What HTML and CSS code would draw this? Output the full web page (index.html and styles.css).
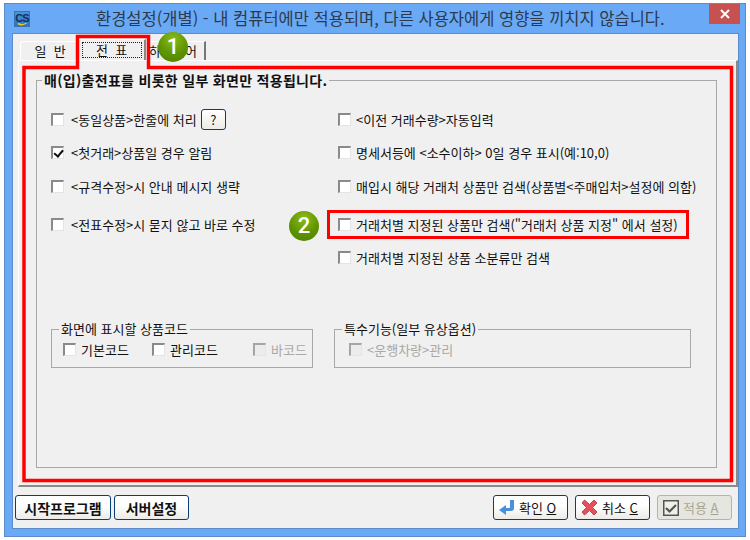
FILE: index.html
```html
<!DOCTYPE html>
<html lang="ko">
<head>
<meta charset="utf-8">
<title>환경설정(개별)</title>
<link rel="stylesheet" href="styles.css">
</head>
<body>
<div class="window">
  <header class="titlebar">
    <span class="app-icon">
      <svg width="14" height="14" viewBox="0 0 14 14"><path d="M3 11.500Q7 14 11.500 11" stroke="#e8c33a" stroke-width="1.500" fill="none"/></svg>
      <span class="app-icon-text">CS</span>
    </span>
    <h1 class="title">환경설정(개별) - 내 컴퓨터에만 적용되며, 다른 사용자에게 영향을 끼치지 않습니다.</h1>
    <button class="close" aria-label="닫기">
      <svg width="12" height="10" viewBox="0 0 12 10"><path d="M2 1l8 8M10 1l-8 8" stroke="#fff" stroke-width="2" fill="none"/></svg>
    </button>
  </header>
  <div class="client">
    <nav class="tabs">
      <div class="tab tab-first">일&nbsp;&nbsp;반</div>
      <div class="tab tab-active"><span class="focus">전&nbsp;&nbsp;표</span></div>
      <div class="tab tab-last">하드웨어</div>
    </nav>
    <section class="pane">
      <fieldset class="group main-group">
        <legend class="legend-bold">매(입)출전표를 비롯한 일부 화면만 적용됩니다.</legend>
        <div class="options">
          <div class="col col-left">
            <label class="opt row-1"><input type="checkbox"><span>&lt;동일상품&gt;한줄에 처리</span><span class="help">?</span></label>
            <label class="opt row-2"><input type="checkbox" checked><span>&lt;첫거래&gt;상품일 경우 알림</span></label>
            <label class="opt row-3"><input type="checkbox"><span>&lt;규격수정&gt;시 안내 메시지 생략</span></label>
            <label class="opt row-4"><input type="checkbox"><span>&lt;전표수정&gt;시 묻지 않고 바로 수정</span></label>
          </div>
          <div class="col">
            <label class="opt row-1"><input type="checkbox"><span>&lt;이전 거래수량&gt;자동입력</span></label>
            <label class="opt row-2"><input type="checkbox"><span>명세서등에 &lt;소수이하&gt; 0일 경우 표시(예:10,0)</span></label>
            <label class="opt row-3"><input type="checkbox"><span>매입시 해당 거래처 상품만 검색(상품별&lt;주매입처&gt;설정에 의함)</span></label>
            <label class="opt row-4"><input type="checkbox"><span>거래처별 지정된 상품만 검색("거래처 상품 지정" 에서 설정)</span></label>
            <label class="opt row-5"><input type="checkbox"><span>거래처별 지정된 상품 소분류만 검색</span></label>
          </div>
        </div>
        <div class="subgroups">
          <fieldset class="group sub-left">
            <legend>화면에 표시할 상품코드</legend>
            <div class="sub-row">
              <label class="opt-sm w-1"><input type="checkbox"><span>기본코드</span></label>
              <label class="opt-sm w-2"><input type="checkbox"><span>관리코드</span></label>
              <label class="opt-sm is-disabled"><input type="checkbox" disabled><span>바코드</span></label>
            </div>
          </fieldset>
          <fieldset class="group sub-right">
            <legend>특수기능(일부 유상옵션)</legend>
            <div class="sub-row">
              <label class="opt-sm is-disabled"><input type="checkbox" disabled><span>&lt;운행차량&gt;관리</span></label>
            </div>
          </fieldset>
        </div>
      </fieldset>
    </section>
    <footer class="footer">
      <button class="btn btn-bold btn-start">시작프로그램</button>
      <button class="btn btn-bold btn-server">서버설정</button>
      <span class="spacer"></span>
      <button class="btn btn-act">
        <svg width="16" height="16" viewBox="0 0 16 16"><path d="M11 0h4v8q0 3-3 3H7v4L0 10l7-5v3h4z" fill="#4a8fdc"/></svg>
        <span>확인 <u>O</u></span>
      </button>
      <button class="btn btn-act">
        <svg width="17" height="17" viewBox="0 0 17 17"><path d="M3.500 1l5 4.500L13 1l3 3-4.500 4.500L16 13l-3 3-4.500-4.500L3.500 16 1 13l4.500-4.500L1 4z" fill="#e5505a" stroke="#b9474b"/></svg>
        <span>취소 <u>C</u></span>
      </button>
      <button class="btn btn-act btn-off" disabled>
        <svg width="16" height="16" viewBox="0 0 16 16"><rect x="0.750" y="0.750" width="14.500" height="14.500" fill="#f0f0ea" stroke="#555" stroke-width="1.500"/><path d="M3 8l3.500 3.500L13 5" stroke="#555" stroke-width="2.200" fill="none"/></svg>
        <span>적용 <u>A</u></span>
      </button>
    </footer>
  </div>
</div>

<svg class="marks" width="750" height="540" viewBox="0 0 750 540" aria-hidden="true">
  <path d="M24 67.500H77.500V36.500H148.500V67.500H731.500V480.500H24Z" fill="none" stroke="#ff0000" stroke-width="3.500"/>
  <rect x="328.500" y="211.500" width="359" height="26" fill="none" stroke="#ff0000" stroke-width="3"/>
</svg>
<div class="badge badge-1">1</div>
<div class="badge badge-2">2</div>
</body>
</html>
```

FILE: styles.css
```css
* { box-sizing: border-box; }
html, body { margin: 0; padding: 0; background: #fff; }
body {
  width: 750px;
  height: 540px;
  position: relative;
  overflow: hidden;
  padding: 3px 4px;
  font-family: "Noto Sans CJK KR", "Liberation Sans", sans-serif;
  font-size: 13px;
  color: #111;
}
.window {
  width: 742px;
  height: 534px;
  background: #69a9f5;
  border: 1px solid #5b8cc8;
  display: flex;
  flex-direction: column;
}
.titlebar {
  height: 29px;
  flex: none;
  display: flex;
  align-items: flex-start;
  padding-left: 9px;
}
.app-icon {
  width: 16px;
  height: 16px;
  margin-top: 7px;
  background: linear-gradient(#4d93d9, #2f72b8);
  border: 1px solid #3a74b0;
  position: relative;
  display: flex;
  align-items: center;
  justify-content: center;
}
.app-icon svg {
  position: absolute;
  left: 0;
  top: 0;
}
.app-icon-text {
  font: bold 11px/1 "Liberation Sans", sans-serif;
  color: #12305c;
  letter-spacing: -1px;
  margin-top: -2px;
}
.title {
  margin: 3px 0 0 66px;
  font-size: 16.500px;
  font-weight: 400;
  line-height: 22px;
  color: #2d3a4d;
  white-space: nowrap;
  width: 600px;
}
.close {
  margin-left: auto;
  margin-right: 5px;
  width: 31px;
  height: 20px;
  border: 0;
  padding: 0;
  background: #c75050;
  display: flex;
  align-items: center;
  justify-content: center;
}
.client {
  width: 727px;
  height: 496px;
  margin-left: 7px;
  background: #f0f0f0;
  border: 1px solid #5b8cc8;
  display: flex;
  flex-direction: column;
}
.tabs {
  height: 26px;
  flex: none;
  display: flex;
  align-items: flex-end;
  padding-left: 7px;
}
.tab {
  height: 19px;
  display: flex;
  align-items: center;
  justify-content: center;
  background: #f0f0f0;
  border-top: 1px solid #fff;
  border-left: 1px solid #fff;
  border-right: 1px solid #696969;
  line-height: 16px;
}
.tab-first {
  width: 57px;
  margin-right: 1px;
  border-radius: 3px 0 0 0;
  padding: 0 0 1px 3px;
}
.tab-active {
  width: 68px;
  height: 21px;
  padding: 2px;
  border-right: 2px solid #888;
}
.focus {
  width: 60px;
  height: 16px;
  display: flex;
  align-items: center;
  justify-content: center;
  border: 1px dotted #222;
}
.tab-last {
  width: 60px;
  border-left: 0;
  border-right: 2px solid #777;
  padding: 0 4px 1px 0;
}
.pane {
  width: 720px;
  height: 427px;
  flex: none;
  margin-left: 5px;
  border-top: 1px solid #fff;
  border-left: 1px solid #fff;
  border-right: 2px solid #8a8a8a;
  border-bottom: 2px solid #8a8a8a;
  padding: 12px 19px 0 17px;
}
.group {
  margin: 0;
  border: 1px solid #a8a8a8;
  padding: 0;
  min-width: 0;
}
.group legend {
  padding: 0 2px;
  line-height: 14px;
  margin-left: 7px;
}
.main-group {
  width: 681px;
  height: 395px;
}
.group .legend-bold {
  font-weight: 700;
  font-size: 14px;
  letter-spacing: .3px;
  margin-left: 5px;
}
.options {
  display: grid;
  grid-template-columns: 287px 1fr;
  height: 235px;
  padding: 22px 0 0 14px;
}
.col { display: flex; flex-direction: column; }
.opt {
  display: flex;
  align-items: center;
  height: 20px;
  white-space: nowrap;
}
.row-2 { margin-top: 13px; }
.row-3 { margin-top: 14px; }
.row-4 { margin-top: 18px; }
.row-5 { margin-top: 13px; }
input[type="checkbox"] {
  appearance: none;
  width: 13px;
  height: 13px;
  margin: 0 5px 0 0;
  flex: none;
  background: #fff;
  border-top: 2px solid #8a8a8a;
  border-left: 2px solid #8a8a8a;
  border-right: 1px solid #e4e4e4;
  border-bottom: 1px solid #e4e4e4;
  position: relative;
}
.col-left input[type="checkbox"] { margin-right: 7px; }
input[type="checkbox"]:checked::after {
  content: "";
  position: absolute;
  left: 1px;
  top: 0;
  width: 7px;
  height: 4px;
  border-left: 2px solid #111;
  border-bottom: 2px solid #111;
  transform: rotate(-50deg) translate(-1px, 1px);
}
input[type="checkbox"]:disabled {
  background: #ececec;
  border-top-color: #a5a5a5;
  border-left-color: #a5a5a5;
}
.help {
  width: 25px;
  height: 21px;
  margin-left: 4px;
  border: 1px solid #0a3f73;
  border-radius: 3px;
  background: linear-gradient(#fff, #ecebe6);
  display: flex;
  align-items: center;
  justify-content: center;
}
.subgroups {
  display: flex;
  gap: 21px;
  margin-left: 14px;
}
.sub-left { width: 262px; height: 46px; }
.sub-right { width: 357px; height: 46px; }
.sub-left .sub-row { padding-left: 11px; }
.sub-right .sub-row { padding-left: 14px; }
.sub-row {
  display: flex;
  align-items: center;
  height: 20px;
  margin-top: 3px;
}
.opt-sm {
  display: flex;
  align-items: center;
  white-space: nowrap;
}
.w-1 { width: 89px; }
.w-2 { width: 101px; }
.is-disabled { color: #a8a8a8; }
.footer {
  flex: none;
  display: flex;
  align-items: flex-start;
  padding: 8px 6px 0 2px;
  gap: 3px;
}
.spacer { flex: 1; }
.btn {
  height: 25px;
  padding: 0;
  border: 1px solid #0a3f73;
  border-radius: 3px;
  background: linear-gradient(#fff 40%, #ecebe6);
  font: inherit;
  color: #111;
  display: flex;
  align-items: center;
  justify-content: center;
  white-space: nowrap;
}
.btn-bold { font-weight: 700; font-size: 14px; }
.btn-start { width: 96px; }
.btn-server { width: 75px; }
.btn-act {
  width: 75px;
  gap: 4px;
  margin-left: 4px;
  justify-content: flex-start;
  padding-left: 5px;
}
.btn-off {
  background: #e6e6e0;
  border-color: #b5b5a0;
  color: #a5a590;
}
.marks {
  position: absolute;
  left: 0;
  top: 0;
  pointer-events: none;
}
.badge {
  position: absolute;
  width: 30px;
  height: 30px;
  border-radius: 50%;
  background: radial-gradient(circle at 50% 25%, #8dbb1a, #5f9400 55%, #4c7f00);
  color: #fff;
  font: 500 22px/30px Roboto, sans-serif;
  text-align: center;
}
.badge-1 { left: 158px; top: 32px; }
.badge-2 { left: 289px; top: 211px; }
```
